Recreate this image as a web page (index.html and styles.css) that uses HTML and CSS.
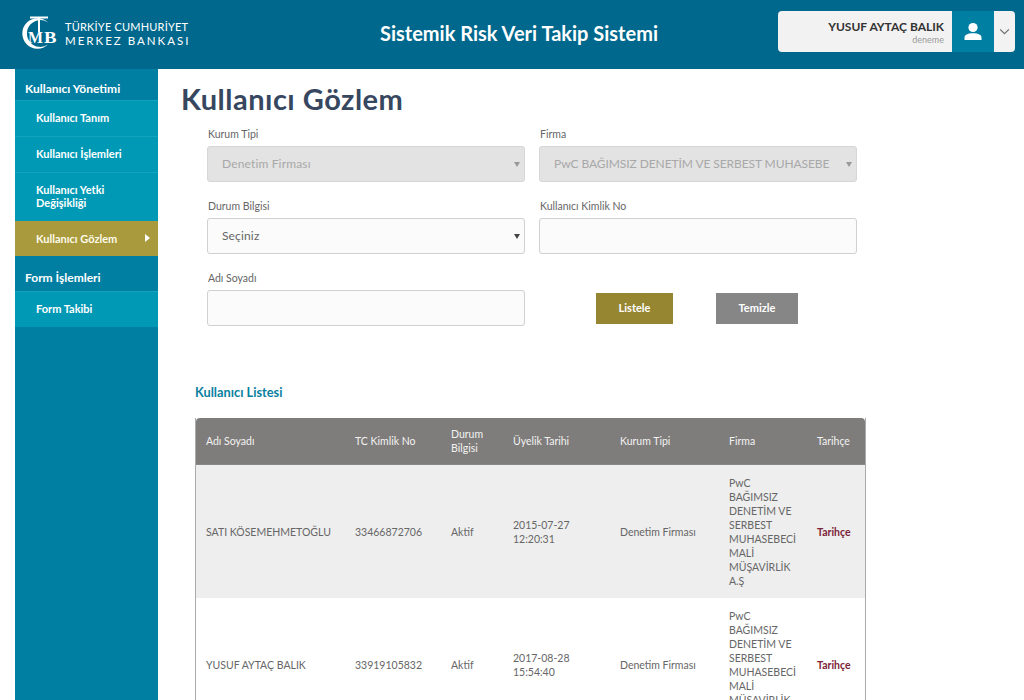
FILE: index.html
```html
<!DOCTYPE html>
<html lang="tr">
<head>
<meta charset="utf-8">
<title>Sistemik Risk Veri Takip Sistemi</title>
<link rel="stylesheet" href="styles.css">
</head>
<body>
<div class="app">
  <header class="topbar">
    <div class="brand">
      <svg class="brand-mark" viewBox="0 0 40 40" width="40" height="40" aria-hidden="true">
        <path class="mark-fill" d="M28 8.500A15.200 15.200 0 1 0 28 30.500A13.400 13.400 0 1 1 28 8.500Z"/>
        <path class="mark-fill" d="M10 2.500H28V4.500H20V18H18V4.500H10Z"/>
        <text class="mark-letter" x="8" y="29" textLength="15" lengthAdjust="spacingAndGlyphs">M</text>
        <text class="mark-letter" x="24" y="29" textLength="12.500" lengthAdjust="spacingAndGlyphs">B</text>
      </svg>
      <div class="brand-text">
        <span class="brand-line">TÜRKİYE CUMHURİYET</span>
        <span class="brand-line brand-line-wide">MERKEZ BANKASI</span>
      </div>
    </div>
    <h1 class="app-title">Sistemik Risk Veri Takip Sistemi</h1>
    <div class="user-box">
      <div class="user-info">
        <span class="user-name">YUSUF AYTAÇ BALIK</span>
        <span class="user-role">deneme</span>
      </div>
      <div class="user-avatar">
        <svg viewBox="0 0 20 20" width="20" height="20" aria-hidden="true">
          <circle cx="10" cy="5.500" r="4.600" fill="#fff"/>
          <path d="M1.500 18v-2.200c0-3 3-4.600 8.500-4.600s8.500 1.600 8.500 4.600V18Z" fill="#fff"/>
        </svg>
      </div>
      <div class="user-caret">
        <svg viewBox="0 0 12 8" width="11" height="7" aria-hidden="true">
          <path d="M1 1.500 6 6.500 11 1.500" fill="none" stroke="#6b6b6b" stroke-width="1.300"/>
        </svg>
      </div>
    </div>
  </header>

  <div class="layout">
    <nav class="sidebar">
      <div class="nav-group">Kullanıcı Yönetimi</div>
      <a class="nav-item">Kullanıcı Tanım</a>
      <a class="nav-item">Kullanıcı İşlemleri</a>
      <a class="nav-item">Kullanıcı Yetki Değişikliği</a>
      <a class="nav-item nav-item-active">Kullanıcı Gözlem<span class="nav-arrow"></span></a>
      <div class="nav-group">Form İşlemleri</div>
      <a class="nav-item">Form Takibi</a>
    </nav>

    <main class="content">
      <h2 class="page-title">Kullanıcı Gözlem</h2>

      <form class="filters">
        <div class="field">
          <label class="field-label">Kurum Tipi</label>
          <div class="control control-disabled"><span class="control-text">Denetim Firması</span><span class="select-arrow"></span></div>
        </div>
        <div class="field">
          <label class="field-label">Firma</label>
          <div class="control control-disabled control-caps"><span class="control-text">PwC BAĞIMSIZ DENETİM VE SERBEST MUHASEBE</span><span class="select-arrow"></span></div>
        </div>
        <div class="field">
          <label class="field-label">Durum Bilgisi</label>
          <div class="control"><span class="control-text">Seçiniz</span><span class="select-arrow"></span></div>
        </div>
        <div class="field">
          <label class="field-label">Kullanıcı Kimlik No</label>
          <div class="control"></div>
        </div>
        <div class="field">
          <label class="field-label">Adı Soyadı</label>
          <div class="control"></div>
        </div>
        <div class="actions">
          <button type="button" class="btn btn-primary">Listele</button>
          <button type="button" class="btn btn-secondary">Temizle</button>
        </div>
      </form>

      <h3 class="section-title">Kullanıcı Listesi</h3>

      <table class="user-table">
        <colgroup>
          <col class="col-name"><col class="col-id"><col class="col-state"><col class="col-date"><col class="col-type"><col class="col-firm"><col class="col-history">
        </colgroup>
        <thead>
          <tr>
            <th>Adı Soyadı</th><th>TC Kimlik No</th><th>Durum Bilgisi</th><th>Üyelik Tarihi</th><th>Kurum Tipi</th><th>Firma</th><th>Tarihçe</th>
          </tr>
        </thead>
        <tbody>
          <tr class="row-alt">
            <td>SATI KÖSEMEHMETOĞLU</td><td>33466872706</td><td>Aktif</td><td>2015-07-27 12:20:31</td><td>Denetim Firması</td>
            <td>PwC BAĞIMSIZ DENETİM VE SERBEST MUHASEBECİ MALİ MÜŞAVİRLİK A.Ş</td><td><a class="history-link">Tarihçe</a></td>
          </tr>
          <tr>
            <td>YUSUF AYTAÇ BALIK</td><td>33919105832</td><td>Aktif</td><td>2017-08-28 15:54:40</td><td>Denetim Firması</td>
            <td>PwC BAĞIMSIZ DENETİM VE SERBEST MUHASEBECİ MALİ MÜŞAVİRLİK A.Ş</td><td><a class="history-link">Tarihçe</a></td>
          </tr>
        </tbody>
      </table>
    </main>
  </div>
</div>
</body>
</html>
```
FILE: styles.css
```css
* { box-sizing: border-box; }
html, body { margin: 0; padding: 0; }
body { font-family: Lato, "Open Sans", sans-serif; color: #555; background: #fff; }

.app { height: 700px; overflow: hidden; display: flex; flex-direction: column; }

.topbar {
  flex: none; height: 69px; background: #00688c; color: #fff;
  display: flex; align-items: center; padding: 0 9px 0 20px;
}
.brand { display: flex; align-items: center; gap: 5px; width: 360px; margin-top: -2px; }
.brand-mark { display: block; flex: none; }
.mark-fill { fill: #fff; }
.mark-letter { fill: #fff; font-family: "Liberation Serif", serif; font-weight: 700; font-size: 17px; }
.brand-text { display: flex; flex-direction: column; line-height: 14px; }
.brand-line { font-size: 11px; letter-spacing: .2px; white-space: nowrap; }
.brand-line-wide { letter-spacing: 2px; font-size: 11.500px; }

.app-title { margin: 0 0 3px; font-size: 20px; font-weight: 700; flex: 1; white-space: nowrap; }

.user-box {
  width: 237px; height: 41px; background: #f2f2f2; border-radius: 4px;
  display: flex; overflow: hidden; margin-top: -6px;
}
.user-info {
  flex: 1; display: flex; flex-direction: column; align-items: flex-end;
  justify-content: center; padding-right: 8px;
}
.user-name { font-size: 12px; font-weight: 700; color: #333; line-height: 15px; }
.user-role { font-size: 9px; color: #9a9a9a; line-height: 11px; }
.user-avatar { width: 42px; background: #007fa3; display: flex; align-items: center; justify-content: center; }
.user-caret { width: 21px; display: flex; align-items: center; justify-content: center; }

.layout { flex: 1; display: flex; padding-left: 15px; min-height: 0; }

.sidebar { flex: none; width: 143px; background: #007fa3; color: #fff; }
.nav-group {
  height: 31px; font-size: 12px; font-weight: 700; padding: 12px 0 0 10px; line-height: 15px;
}
.nav-group:not(:first-child) { height: 35px; padding-top: 14px; }
.nav-item {
  display: block; background: #0099b5; border-top: 1px solid #12a3bd;
  font-size: 11px; font-weight: 700; line-height: 13px; padding: 10px 30px 12px 21px;
  position: relative;
}
.nav-item-active {
  background: #a99a3d; border-top-color: #a99a3d; color: #fdfbe9;
  padding: 10px 10px 11px 21px;
}
.nav-arrow {
  position: absolute; right: 8px; top: 12px; width: 0; height: 0;
  border-left: 5px solid #fff; border-top: 4px solid transparent; border-bottom: 4px solid transparent;
}

.content { flex: 1; min-width: 0; padding: 0 0 0 23px; }
.page-title { margin: 13px 0 0; font-size: 29px; letter-spacing: .5px; line-height: 34px; font-weight: 700; color: #36475f; }

.filters {
  display: grid; grid-template-columns: 318px 318px; column-gap: 14px; row-gap: 18px;
  margin: 12px 0 0 26px; width: 650px;
}
.field { display: flex; flex-direction: column; }
.field-label { font-size: 10.500px; line-height: 13px; color: #666; padding-left: 1px; margin-bottom: 5px; }
.control {
  height: 36px; border: 1px solid #d0d0d0; border-radius: 3px; background: #fbfbfb;
  display: flex; align-items: center; padding: 0 4px 0 14px; font-size: 12px; letter-spacing: .15px; color: #666;
}
.control-disabled { background: #e3e3e3; color: #a8a8a8; border-color: #d6d6d6; }
.control-caps { letter-spacing: -.08px; }
.control-text { flex: 1; min-width: 0; white-space: nowrap; overflow: hidden; padding-bottom: 2px; }
.select-arrow {
  flex: none; width: 0; height: 0; margin-left: 14px;
  border-left: 3px solid transparent; border-right: 3px solid transparent; border-top: 5px solid #444;
}
.control-disabled .select-arrow { border-top-color: #999; }

.actions { display: flex; align-items: flex-end; gap: 43px; padding: 0 0 2px 57px; }
.btn { height: 31px; border: 0; color: #fff; font: 700 11px Lato, sans-serif; padding: 0 0 2px; }
.btn-primary { width: 77px; background: #968632; }
.btn-secondary { width: 82px; background: #868686; }

.section-title { margin: 58px 0 0 14px; font-size: 12.800px; line-height: 16px; font-weight: 700; color: #0a7f9f; }

.user-table {
  margin: 18px 0 0 14px; width: 671px; border-collapse: separate; border-spacing: 0;
  table-layout: fixed; font-size: 10.500px; line-height: 14px; color: #666;
  border-right: 1px solid #aaa; border-left: 1px solid #aaa;
}
.col-name { width: 149px; }
.col-id { width: 96px; }
.col-state { width: 62px; }
.col-date { width: 107px; }
.col-type { width: 109px; }
.col-firm { width: 88px; }
.col-history { width: 58px; }
.user-table th {
  background: #7f7d7b; color: #f2f2f2; font-weight: 400; text-align: left;
  height: 47px; padding: 0 4px 0 10px; border-bottom: 1px solid #8a8886;
}
.user-table th:first-child { border-top-left-radius: 4px; }
.user-table th:last-child { border-top-right-radius: 4px; }
.user-table td { padding: 10.500px 8px 10.500px 10px; vertical-align: middle; }
.row-alt td { background: #eeeeee; }
.history-link { font-weight: 700; color: #7c2338; }
```
